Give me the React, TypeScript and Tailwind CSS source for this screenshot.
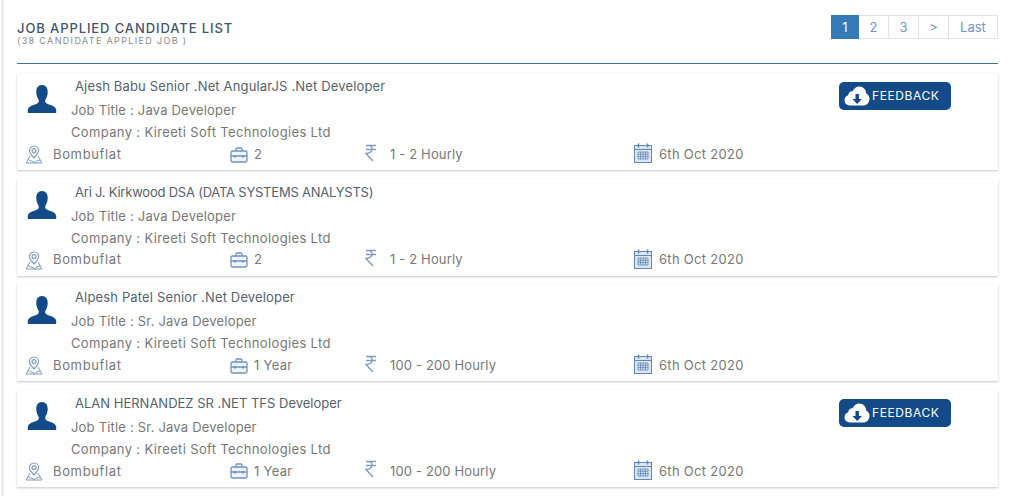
const candidates = [
  { name: "Ajesh Babu Senior .Net AngularJS .Net Developer", nameTrack: "tracking-[0.15px]", title: "Java Developer", exp: "2", pay: "1 - 2 Hourly", feedback: true },
  { name: "Ari J. Kirkwood DSA (DATA SYSTEMS ANALYSTS)", nameTrack: "tracking-[-0.22px]", title: "Java Developer", exp: "2", pay: "1 - 2 Hourly", feedback: false },
  { name: "Alpesh Patel Senior .Net Developer", nameTrack: "tracking-[0.15px]", title: "Sr. Java Developer", exp: "1 Year", pay: "100 - 200 Hourly", feedback: false },
  { name: "ALAN HERNANDEZ SR .NET TFS Developer", nameTrack: "tracking-[0px]", title: "Sr. Java Developer", exp: "1 Year", pay: "100 - 200 Hourly", feedback: true },
];

const UserIcon = () => (
  <svg width="30" height="30" viewBox="0 0 30 30" fill="#134a87">
    <path d="M15 1c3.800 0 5.900 3 5.700 7.200-.1 2.600-.8 5-1.900 6.800-.6 1-.8 2.200-.3 3.200.6 1.200 2.200 1.800 4.400 2.600 3 1.100 5.800 2.200 6.300 5.200.1.700.1 2-.1 3H.9c-.2-1-.2-2.300-.1-3 .5-3 3.300-4.100 6.300-5.200 2.200-.8 3.800-1.400 4.400-2.600.5-1 .3-2.200-.3-3.200-1.100-1.800-1.800-4.200-1.900-6.800C9.100 4 11.200 1 15 1z" />
  </svg>
);

const PinIcon = () => (
  <svg width="18" height="19" viewBox="0 0 18 19" fill="none" stroke="#7d9cc0" strokeWidth="1.200">
    <path d="M9 13c-2.400-2.500-4.600-4.800-4.600-7.400C4.400 3 6.400 1 9 1s4.600 2 4.600 4.600c0 2.600-2.200 4.900-4.600 7.400z" />
    <circle cx="9" cy="5.600" r="2" />
    <path d="M5 11 1 18h16l-4-7M3 14.500l7.500 3.500M15 15l-4.500 1.500" strokeWidth="1" />
  </svg>
);

const BriefcaseIcon = () => (
  <svg width="18" height="16" viewBox="0 0 18 16" fill="none" stroke="#6f94bd" strokeWidth="1.300">
    <rect x="1" y="4" width="16" height="11" rx="1.500" fill="#eef3f8" />
    <path d="M6 4V2a1 1 0 0 1 1-1h4a1 1 0 0 1 1 1v2M1 9h16" />
    <path d="M5 8v2.500M13 8v2.500" strokeWidth="1.800" />
  </svg>
);

const RupeeIcon = () => (
  <svg width="12" height="18" viewBox="0 0 12 18" fill="none" stroke="#7d9cc0" strokeWidth="1.300">
    <path d="M1 1.500h10M1 5.500h10M3.500 1.500c5 0 5.500 7.500-2.500 8l7 7.500" />
  </svg>
);

const CalendarIcon = () => (
  <svg width="18" height="20" viewBox="0 0 18 20" fill="none" stroke="#5f88b5" strokeWidth="1">
    <rect x="0.500" y="2.500" width="17" height="17" fill="#dbe6f1" />
    <path d="M0.500 6.500h17" />
    <path d="M4.500 0.500v4M13.500 0.500v4" strokeWidth="1.500" />
    <path d="M4 9h10v7H4zM4 11.300h10M4 13.600h10M6.500 9v7M9 9v7M11.500 9v7" strokeWidth="0.800" />
  </svg>
);

const CloudDownloadIcon = () => (
  <svg width="26" height="20" viewBox="0 0 26 20">
    <path fill="#fff" d="M6 19.500c-3.200 0-5.500-2.300-5.500-5.200 0-2.400 1.500-4.300 3.700-5C4.300 6.800 6.300 5 8.600 5.300 10 2.300 12.500.5 15.300.5c3.900 0 6.800 3 6.900 6.900 2.100.9 3.400 3.100 3.300 5.500-.1 3.700-2.800 6.600-6.300 6.600z" />
    <path fill="#134a87" d="M11.500 8h3.400v5h3l-4.700 5-4.700-5h3z" />
  </svg>
);

const Meta = ({ icon, text, width, iconBox }: { icon: React.ReactNode; text: string; width: string; iconBox: string }) => (
  <div className={`flex items-center ${width}`}>
    <span className={`flex items-center ${iconBox}`}>{icon}</span>
    <span>{text}</span>
  </div>
);

const Card = ({ c }: { c: (typeof candidates)[number] }) => (
  <div className="h-[97px] bg-white shadow-[0_1px_2px_rgba(0,0,0,0.22)] pl-2 pr-[47px] text-[13px] text-[#777777]">
    <div className="flex h-[70px]">
      <div className="w-[46px] pt-[11px] pl-[2px]">
        <UserIcon />
      </div>
      <div className="flex-1">
        <div className={`h-[26px] pt-[4px] pl-[4px] leading-[18px] text-[#55626f] ${c.nameTrack}`}>{c.name}</div>
        <div className="h-[22px] leading-[22px] tracking-[0.2px]">Job Title : {c.title}</div>
        <div className="h-[22px] leading-[22px] tracking-[0.35px]">Company : Kireeti Soft Technologies Ltd</div>
      </div>
      {c.feedback && (
        <button className="mt-[9px] flex h-[28px] w-[112px] items-center gap-[2px] rounded-[5px] bg-[#134a87] pl-[5px] text-[12px] tracking-[0.6px] text-white">
          <CloudDownloadIcon />
          FEEDBACK
        </button>
      )}
    </div>
    <div className="flex h-[22px] items-center pt-[1px] tracking-[0.3px]">
      <Meta icon={<PinIcon />} text="Bombuflat" width="w-[205px] tracking-[0.65px]" iconBox="w-[28px]" />
      <Meta icon={<BriefcaseIcon />} text={c.exp} width="w-[135px]" iconBox="w-[24px]" />
      <Meta icon={<RupeeIcon />} text={c.pay} width="w-[269px] tracking-[0.15px]" iconBox="w-[25px] pb-[4px]" />
      <Meta icon={<CalendarIcon />} text="6th Oct 2020" width="w-[140px]" iconBox="w-[25px] pb-[3px]" />
    </div>
  </div>
);

export default function App() {
  return (
    <div className="h-[496px] w-[1012px] overflow-hidden bg-white font-['Inter','Liberation_Sans',sans-serif]">
      <div className="ml-[1px] h-full border-l-[3px] border-[#ededed] pl-[13px] pr-[14px]">
        <div className="flex h-[64px] justify-between border-b border-[#3f6ea5] pt-[15px]">
          <div>
            <div className="pt-[5px] text-[13px] leading-[16px] font-medium tracking-[0.9px] text-[#44546a]">JOB APPLIED CANDIDATE LIST</div>
            <div className="text-[9px] leading-[10px] tracking-[1.35px] text-[#8a8a8a]">(38 CANDIDATE APPLIED JOB )</div>
          </div>
          <div className="flex h-[24px] text-[13px] text-[#6f95c8]">
            <span className="flex w-[28px] items-center justify-center bg-[#337ab7] pt-[1px] text-white">1</span>
            <span className="flex w-[30px] items-center justify-center border border-l-0 border-[#e2e2e2] pt-[1px]">2</span>
            <span className="flex w-[30px] items-center justify-center border border-l-0 border-[#e2e2e2] pt-[1px]">3</span>
            <span className="flex w-[30px] items-center justify-center border border-l-0 border-[#e2e2e2] pt-[1px]">&gt;</span>
            <span className="flex w-[49px] items-center justify-center border border-l-0 border-[#e2e2e2] pt-[1px]">Last</span>
          </div>
        </div>
        <div className="flex flex-col gap-[8.67px] pt-[9px]">
          {candidates.map((c) => (
            <Card key={c.name} c={c} />
          ))}
        </div>
      </div>
    </div>
  );
}
